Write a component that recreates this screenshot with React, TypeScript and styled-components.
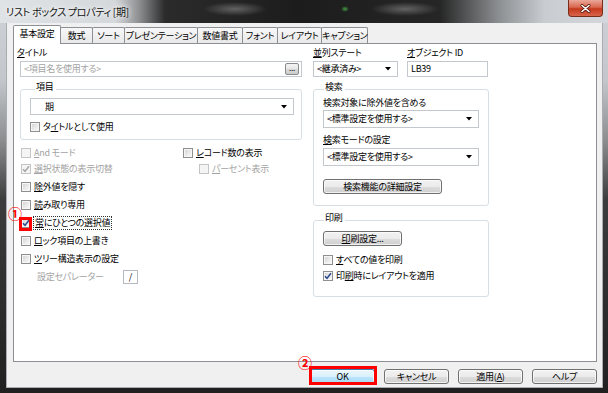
import React from 'react';
import styled, {createGlobalStyle, css} from 'styled-components';

const GlobalStyle = createGlobalStyle`
  html, body { margin: 0; padding: 0; }
  body {
    width: 608px;
    height: 393px;
    overflow: hidden;
    font-family: "Noto Sans CJK JP", "Noto Sans", sans-serif;
    font-size: 9px;
    letter-spacing: -0.25px;
    font-feature-settings: "palt";
    color: #000;
  }
  u { text-underline-offset: 1px; }
`;

const Win = styled.div`
  position: relative;
  width: 608px;
  height: 393px;
  display: flex;
  flex-direction: column;
  background: linear-gradient(to bottom, #cfd3d7 0, #c3c7cb 80px, #8c8e90 140px, #3c3c3c 200px, #202020 100%);
`;

const TitleBar = styled.div`
  flex: none;
  height: 23px;
  display: flex;
  align-items: flex-start;
  background:
    radial-gradient(ellipse 32px 7px at 235px 9px, rgba(150, 150, 150, 0.55), transparent),
    radial-gradient(ellipse 4px 3px at 345px 9px, rgba(70, 170, 70, 0.9), transparent),
    radial-gradient(ellipse 34px 7px at 405px 9px, rgba(150, 150, 150, 0.55), transparent),
    linear-gradient(to right, #e0e3e6 0, #d5d8db 115px, #8a8c8e 140px, #2b2b2b 165px, #1c1c1c 300px, #262626 440px, #8e9194 500px, #c9cdd1 545px, #d4d8dc 100%);
`;

const Title = styled.div`
  margin: 4px 0 0 6px;
  font-size: 10px;
  letter-spacing: -0.3px;
  line-height: 15px;
  color: #111;
  text-shadow: 0 0 4px #fff, 0 0 8px #fff;
`;

const Close = styled.div`
  margin-left: auto;
  margin-right: 5px;
  width: 35px;
  height: 17px;
  box-sizing: border-box;
  border: 1px solid #7a2c1c;
  border-top: none;
  border-radius: 0 0 4px 4px;
  background: linear-gradient(#eba89a 0, #d9684f 45%, #c5391d 55%, #d7654a 100%);
  display: flex;
  align-items: center;
  justify-content: center;
`;

const Client = styled.div`
  flex: 1;
  margin: 0 5px 5px 6px;
  border: 1px solid #a9adb1;
  border-top: none;
  background: #f0f0f0;
  display: flex;
  flex-direction: column;
  padding: 2px 5px 0 6px;
`;

const TabStrip = styled.div`
  display: flex;
  align-items: flex-end;
  height: 18px;
`;

const Tab = styled.div<{$w: number; $active?: boolean}>`
  position: relative;
  box-sizing: border-box;
  width: ${p => p.$w}px;
  height: 16px;
  margin-right: -1px;
  border: 1px solid #8c8f94;
  border-bottom: none;
  border-radius: 2px 2px 0 0;
  background: linear-gradient(#f7f7f7, #e9e9e9);
  text-align: center;
  line-height: 15px;
  white-space: nowrap;
  ${p => p.$active && css`
    height: 19px;
    margin-bottom: -1px;
    background: #fff;
    z-index: 1;
    line-height: 15px;
  `}
`;

const Panel = styled.div`
  box-sizing: border-box;
  height: 319px;
  border: 1px solid #8c8f94;
  background: #fff;
  display: flex;
  gap: 11px;
  padding: 3px 0 0 6px;
`;

const Column = styled.div<{$w: number}>`
  width: ${p => p.$w}px;
  display: flex;
  flex-direction: column;
`;

const Label = styled.div<{$shift?: number; $mt?: number; $grey?: boolean}>`
  height: 12px;
  line-height: 12px;
  white-space: nowrap;
  margin-left: ${p => p.$shift || 0}px;
  margin-top: ${p => p.$mt || 0}px;
  color: ${p => (p.$grey ? '#a3a3a3' : '#000')};
`;

const TextBox = styled.div<{$w?: number}>`
  box-sizing: border-box;
  height: 16px;
  width: ${p => (p.$w ? `${p.$w}px` : '100%')};
  margin-top: 2px;
  border: 1px solid #c3c7ce;
  background: #fff;
  display: flex;
  align-items: center;
  padding: 0 2px 0 3px;
  line-height: 12px;
`;

const Placeholder = styled.span`
  color: #a3a3a3;
  flex: 1;
`;

const DotsButton = styled.div`
  box-sizing: border-box;
  width: 14px;
  height: 12px;
  border: 1px solid #8a8a8a;
  border-radius: 2px;
  background: linear-gradient(#f4f4f4 0, #e6e6e6 50%, #d8d8d8 51%, #cdcdcd 100%);
  font-size: 8px;
  line-height: 7px;
  text-align: center;
`;

const Select = styled.div<{$h?: number; $mt?: number; $pad?: number}>`
  box-sizing: border-box;
  height: ${p => p.$h || 17}px;
  margin-top: ${p => p.$mt || 0}px;
  border: 1px solid #c3c7ce;
  background: #fff;
  display: flex;
  align-items: center;
  padding: 0 6px 0 ${p => p.$pad ?? 3}px;
  line-height: 12px;
  white-space: nowrap;
  span { flex: 1; }
`;

const Row = styled.div<{$gap: number}>`
  display: flex;
  gap: ${p => p.$gap}px;
`;

const Field = styled.div<{$w: number}>`
  width: ${p => p.$w}px;
  display: flex;
  flex-direction: column;
`;

const Group = styled.fieldset<{$mt: number; $pl: number; $pr: number; $pb: number}>`
  margin: ${p => p.$mt}px 0 0 0;
  padding: 0 ${p => p.$pr}px ${p => p.$pb}px ${p => p.$pl}px;
  border: 1px solid #d5dfe5;
  border-radius: 3px;
  min-width: 0;
  display: flex;
  flex-direction: column;
  align-items: stretch;
`;

const Legend = styled.legend<{$ml: number}>`
  margin-left: ${p => p.$ml}px;
  padding: 0 2px 4px 1px;
  line-height: 12px;
  font-size: 9px;
`;

const Button = styled.div<{$w: number; $mt?: number; $default?: boolean}>`
  box-sizing: border-box;
  width: ${p => p.$w}px;
  height: 15px;
  margin-top: ${p => p.$mt || 0}px;
  border: 1px solid #707070;
  border-radius: 3px;
  background: linear-gradient(#f2f2f2 0, #ebebeb 50%, #dddddd 51%, #cfcfcf 100%);
  box-shadow: inset 0 0 0 1px rgba(255, 255, 255, 0.7);
  text-align: center;
  line-height: 13px;
  white-space: nowrap;
  ${p => p.$default && css`
    border-color: #3c7fb1;
    background: linear-gradient(#eaf6fd 0, #d9f0fc 50%, #bee6fd 51%, #a7d9f5 100%);
  `}
`;

const CheckRow = styled.div<{$h: number; $mt?: number; $indent?: number}>`
  height: ${p => p.$h}px;
  margin-top: ${p => p.$mt || 0}px;
  padding-left: ${p => p.$indent || 0}px;
  display: flex;
  align-items: center;
  gap: 3px;
  white-space: nowrap;
`;

const Box = styled.span<{$disabled?: boolean}>`
  box-sizing: border-box;
  flex: none;
  width: 10px;
  height: 10px;
  border: 1px solid ${p => (p.$disabled ? '#c4c4c4' : '#8e8f8f')};
  background: ${p => (p.$disabled
    ? '#f4f4f4'
    : 'linear-gradient(135deg, #cfcfcf 0, #e8e8e8 50%, #fbfbfb 100%)')};
  box-shadow: inset 0 0 0 1px #f6f6f6;
  display: flex;
  align-items: center;
  justify-content: center;
`;

const CheckText = styled.span<{$grey?: boolean; $focus?: boolean}>`
  line-height: 12px;
  color: ${p => (p.$grey ? '#a3a3a3' : '#000')};
  ${p => p.$focus && css`
    outline: 1px dotted #333;
    outline-offset: 0;
    padding: 0 1px;
  `}
`;

const CheckGrid = styled.div`
  display: grid;
  grid-template-columns: 162px 1fr;
  margin-top: 5px;
  margin-left: 1px;
`;

const CheckList = styled.div`
  display: flex;
  flex-direction: column;
  margin-left: 1px;
  margin-top: 1px;
`;

const SepRow = styled.div`
  display: flex;
  align-items: center;
  height: 14px;
  margin-top: 2px;
  padding-left: 17px;
`;

const SepLabel = styled.span`
  color: #a3a3a3;
  width: 86px;
  line-height: 12px;
`;

const SepInput = styled.div`
  box-sizing: border-box;
  width: 15px;
  height: 14px;
  border: 1px solid #b5b9c0;
  text-align: center;
  line-height: 12px;
`;

const ButtonBar = styled.div`
  display: flex;
  justify-content: flex-end;
  gap: 9px;
  margin-top: 7px;
`;

const RedBox = styled.div<{$x: number; $y: number; $w: number; $h: number}>`
  position: absolute;
  left: ${p => p.$x}px;
  top: ${p => p.$y}px;
  width: ${p => p.$w}px;
  height: ${p => p.$h}px;
  box-sizing: border-box;
  border: 3px solid #ff0000;
  pointer-events: none;
`;

const Marker = styled.div<{$x: number; $y: number}>`
  position: absolute;
  left: ${p => p.$x}px;
  top: ${p => p.$y}px;
  color: #ff0000;
  font-size: 14px;
  font-weight: 700;
  line-height: 14px;
  letter-spacing: 0;
`;

const Arrow = () => (
  <svg width="6" height="4" viewBox="0 0 6 4"><path d="M0 0H6L3 3.5Z" fill="#000" /></svg>
);

const Check = ({checked, disabled}: {checked?: boolean; disabled?: boolean}) => (
  <Box $disabled={disabled}>
    {checked && (
      <svg width="8" height="8" viewBox="0 0 8 8">
        <path d="M1 4.3L3 6.4L7 1.3" fill="none" stroke={disabled ? '#a8a8a8' : '#2e4a8e'} strokeWidth="1.6" />
      </svg>
    )}
  </Box>
);

const tabs: [string, number][] = [
  ['基本設定', 48], ['数式', 33], ['ソート', 33], ['プレゼンテーション', 74],
  ['数値書式', 46], ['フォント', 36], ['レイアウト', 45], ['キャプション', 47],
];

const App = () => {
  return (
    <Win>
      <GlobalStyle />
      <TitleBar>
        <Title>リスト ボックス プロパティ [期]</Title>
        <Close>
          <svg width="11" height="9" viewBox="0 0 11 9">
            <path d="M2 1.5L9 7.5M9 1.5L2 7.5" stroke="#5a1a10" strokeWidth="3" strokeLinecap="round" />
            <path d="M2 1.5L9 7.5M9 1.5L2 7.5" stroke="#fff" strokeWidth="1.6" strokeLinecap="round" />
          </svg>
        </Close>
      </TitleBar>
      <Client>
        <TabStrip>
          {tabs.map(([t, w], i) => (
            <Tab key={t} $w={w} $active={i === 0}>{t}</Tab>
          ))}
        </TabStrip>
        <Panel>
          <Column $w={282}>
            <Label $shift={-3}><u>タ</u>イトル</Label>
            <TextBox>
              <Placeholder>&lt;項目名を使用する&gt;</Placeholder>
              <DotsButton>...</DotsButton>
            </TextBox>
            <Group $mt={4} $pl={9} $pr={7} $pb={5}>
              <Legend $ml={5}>項目</Legend>
              <Select $mt={1} $pad={14}><span>期</span><Arrow /></Select>
              <CheckRow $h={14} $mt={5}>
                <Check />
                <CheckText>タ<u>イ</u>トルとして使用</CheckText>
              </CheckRow>
            </Group>
            <CheckGrid>
              <CheckRow $h={16}>
                <Check disabled />
                <CheckText $grey><u>A</u>nd モード</CheckText>
              </CheckRow>
              <CheckRow $h={16}>
                <Check />
                <CheckText><u>レ</u>コード数の表示</CheckText>
              </CheckRow>
              <CheckRow $h={16}>
                <Check checked disabled />
                <CheckText $grey><u>選</u>択状態の表示切替</CheckText>
              </CheckRow>
              <CheckRow $h={16} $indent={16}>
                <Check disabled />
                <CheckText $grey><u>パ</u>ーセント表示</CheckText>
              </CheckRow>
            </CheckGrid>
            <CheckList>
              <CheckRow $h={18}>
                <Check />
                <CheckText><u>除</u>外値を隠す</CheckText>
              </CheckRow>
              <CheckRow $h={18}>
                <Check />
                <CheckText><u>読</u>み取り専用</CheckText>
              </CheckRow>
              <CheckRow $h={18}>
                <Check checked />
                <CheckText $focus><u>常</u>にひとつの選択値</CheckText>
              </CheckRow>
              <CheckRow $h={18}>
                <Check />
                <CheckText><u>ロ</u>ック項目の上書き</CheckText>
              </CheckRow>
              <CheckRow $h={18}>
                <Check />
                <CheckText><u>ツ</u>リー構造表示の設定</CheckText>
              </CheckRow>
            </CheckList>
            <SepRow>
              <SepLabel>設定セパレーター</SepLabel>
              <SepInput>/</SepInput>
            </SepRow>
          </Column>
          <Column $w={176}>
            <Row $gap={9}>
              <Field $w={85}>
                <Label><u>並</u>列ステート</Label>
                <Select $mt={2} $h={16}><span>&lt;継承済み&gt;</span><Arrow /></Select>
              </Field>
              <Field $w={81}>
                <Label><u>オ</u>ブジェクト ID</Label>
                <TextBox>LB39</TextBox>
              </Field>
            </Row>
            <Group $mt={4} $pl={9} $pr={9} $pb={11}>
              <Legend $ml={1}>検索</Legend>
              <Label>検索対象に除外値を含める</Label>
              <Select $mt={1} $h={18}><span>&lt;標準設定を使用する&gt;</span><Arrow /></Select>
              <Label $mt={6}><u>検</u>索モードの設定</Label>
              <Select $mt={2} $h={18}><span>&lt;標準設定を使用する&gt;</span><Arrow /></Select>
              <Button $w={119} $mt={13}>検索機能の詳細設定</Button>
            </Group>
            <Group $mt={6} $pl={9} $pr={9} $pb={13}>
              <Legend $ml={1}>印刷</Legend>
              <Button $w={79} $mt={3}><u>印</u>刷設定...</Button>
              <CheckRow $h={14} $mt={7}>
                <Check />
                <CheckText><u>す</u>べての値を印刷</CheckText>
              </CheckRow>
              <CheckRow $h={14} $mt={2}>
                <Check checked />
                <CheckText>印<u>刷</u>時にレイアウトを適用</CheckText>
              </CheckRow>
            </Group>
          </Column>
        </Panel>
        <ButtonBar>
          <Button $w={65} $default>OK</Button>
          <Button $w={65}>キャンセル</Button>
          <Button $w={65}>適用(<u>A</u>)</Button>
          <Button $w={65}>ヘルプ</Button>
        </ButtonBar>
      </Client>
      <Marker $x={8} $y={206}>①</Marker>
      <RedBox $x={19} $y={217} $w={13} $h={14} />
      <Marker $x={298} $y={355}>②</Marker>
      <RedBox $x={309} $y={366} $w={68} $h={19} />
    </Win>
  );
};

export default App;
